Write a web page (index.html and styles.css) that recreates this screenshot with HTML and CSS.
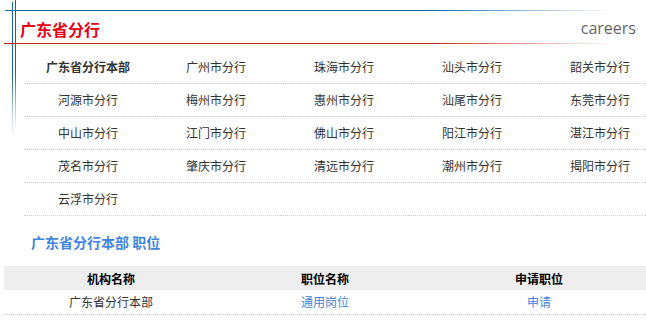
FILE: index.html
```html
<!DOCTYPE html>
<html lang="zh-CN">
<head>
<meta charset="utf-8">
<title>广东省分行</title>
<link rel="stylesheet" href="styles.css">
</head>
<body>
<div class="page">
  <span class="vline vline-blue"></span>
  <span class="vline vline-red"></span>
  <header class="head">
    <h1 class="head-title">广东省分行</h1>
    <span class="head-en">careers</span>
  </header>
  <ul class="branches">
    <li class="branch branch-main">广东省分行本部</li>
    <li class="branch">广州市分行</li>
    <li class="branch">珠海市分行</li>
    <li class="branch">汕头市分行</li>
    <li class="branch">韶关市分行</li>
    <li class="branch">河源市分行</li>
    <li class="branch">梅州市分行</li>
    <li class="branch">惠州市分行</li>
    <li class="branch">汕尾市分行</li>
    <li class="branch">东莞市分行</li>
    <li class="branch">中山市分行</li>
    <li class="branch">江门市分行</li>
    <li class="branch">佛山市分行</li>
    <li class="branch">阳江市分行</li>
    <li class="branch">湛江市分行</li>
    <li class="branch">茂名市分行</li>
    <li class="branch">肇庆市分行</li>
    <li class="branch">清远市分行</li>
    <li class="branch">潮州市分行</li>
    <li class="branch">揭阳市分行</li>
    <li class="branch">云浮市分行</li>
    <li class="branch"></li>
    <li class="branch"></li>
    <li class="branch"></li>
    <li class="branch"></li>
  </ul>
  <h2 class="section-title">广东省分行本部 职位</h2>
  <table class="jobs">
    <thead>
      <tr><th>机构名称</th><th>职位名称</th><th>申请职位</th></tr>
    </thead>
    <tbody>
      <tr><td>广东省分行本部</td><td><a class="link" href="#">通用岗位</a></td><td><a class="link" href="#">申请</a></td></tr>
    </tbody>
  </table>
</div>
</body>
</html>
```
FILE: styles.css
```css
html, body {
  margin: 0;
  padding: 0;
  background: #fff;
  overflow: hidden;
}
body {
  font-family: "Noto Sans CJK SC", "Noto Sans", sans-serif;
  font-size: 12px;
  color: #333;
}
.page {
  position: relative;
  width: 646px;
  height: 323px;
  overflow: hidden;
}
.vline {
  position: absolute;
  width: 1px;
  top: 0;
}
.vline-blue {
  left: 12px;
  top: 2px;
  height: 134px;
  background: linear-gradient(to bottom, #1569ad 0%, #1569ad 55%, rgba(21,105,173,0.4) 80%, rgba(21,105,173,0) 100%);
}
.vline-red {
  left: 15px;
  height: 130px;
  background: linear-gradient(to bottom, #c0281e 0%, #c0281e 55%, rgba(192,40,30,0.4) 80%, rgba(192,40,30,0) 100%);
}
.head {
  position: relative;
  margin-top: 10px;
  height: 34px;
  display: flex;
  align-items: center;
  justify-content: space-between;
  padding: 3px 10px 0 20px;
  box-sizing: border-box;
}
.head::before,
.head::after {
  content: "";
  position: absolute;
  height: 1px;
  width: 610px;
}
.head::before {
  top: 0;
  left: 5px;
  background: linear-gradient(to right, #1569ad 0%, #1569ad 70%, rgba(21,105,173,0.3) 90%, rgba(21,105,173,0) 100%);
}
.head::after {
  bottom: 0;
  left: 4px;
  background: linear-gradient(to right, #c0281e 0%, #c0281e 70%, rgba(192,40,30,0.3) 90%, rgba(192,40,30,0) 100%);
}
.head-title {
  margin: 0;
  font-size: 16px;
  font-weight: bold;
  color: #e60012;
  letter-spacing: 0;
}
.head-en {
  font-family: "Open Sans", sans-serif;
  font-size: 16px;
  color: #666;
  padding-bottom: 2px;
}
.branches {
  list-style: none;
  margin: 7px 0 0 24px;
  padding: 0;
  width: 640px;
  display: grid;
  grid-template-columns: repeat(5, 128px);
}
.branch {
  height: 32px;
  line-height: 32px;
  text-align: center;
  border-bottom: 1px dotted #d0d0d0;
}
.branch-main {
  font-weight: bold;
}
.section-title {
  margin: 17px 0 0 31px;
  font-size: 14px;
  line-height: 18px;
  font-weight: bold;
  color: #3f86e0;
}
.jobs {
  margin: 15px 0 0 4px;
  width: 642px;
  border-collapse: collapse;
  table-layout: fixed;
}
.jobs th {
  background: #eeeeee;
  color: #000;
  font-weight: bold;
  height: 24px;
  padding: 0;
  text-align: center;
}
.jobs td {
  height: 22px;
  padding: 0 0 2px;
  text-align: center;
  border-bottom: 1px dotted #d0d0d0;
}
.link {
  color: #3f86e0;
  text-decoration: none;
}
```
